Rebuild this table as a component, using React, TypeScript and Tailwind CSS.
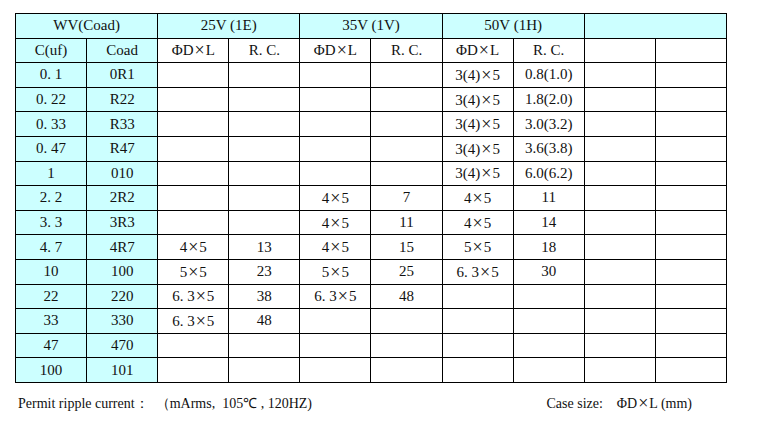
const cyan = "bg-[#ccffff]";

const rows: [string, string, string, string, string, string, string, string][] = [
  ["0. 1", "0R1", "", "", "", "", "3(4)×5", "0.8(1.0)"],
  ["0. 22", "R22", "", "", "", "", "3(4)×5", "1.8(2.0)"],
  ["0. 33", "R33", "", "", "", "", "3(4)×5", "3.0(3.2)"],
  ["0. 47", "R47", "", "", "", "", "3(4)×5", "3.6(3.8)"],
  ["1", "010", "", "", "", "", "3(4)×5", "6.0(6.2)"],
  ["2. 2", "2R2", "", "", "4×5", "7", "4×5", "11"],
  ["3. 3", "3R3", "", "", "4×5", "11", "4×5", "14"],
  ["4. 7", "4R7", "4×5", "13", "4×5", "15", "5×5", "18"],
  ["10", "100", "5×5", "23", "5×5", "25", "6. 3×5", "30"],
  ["22", "220", "6. 3×5", "38", "6. 3×5", "48", "", ""],
  ["33", "330", "6. 3×5", "48", "", "", "", ""],
  ["47", "470", "", "", "", "", "", ""],
  ["100", "101", "", "", "", "", "", ""],
];

const cell =
  "border border-black text-center align-middle p-0 leading-none [font-family:Liberation_Serif,serif] text-[15px] text-[#111]";

// the wide multiplication sign of the source sheet
function Val({ text }: { text: string }) {
  const parts = text.split("×");
  if (parts.length === 1) return <>{text}</>;
  return (
    <>
      {parts[0]}
      <span className="inline-block px-[1px] text-[18px] leading-none align-[-1px]">×</span>
      {parts[1]}
    </>
  );
}

export default function App() {
  return (
    <div className="w-[764px] h-[430px] bg-white pt-[13px] pl-[15px] [font-family:Liberation_Serif,serif] text-[15px] text-[#111]">
      <table className="table-fixed border-collapse w-[712px]">
        <colgroup>
          {Array.from({ length: 10 }).map((_, i) => (
            <col key={i} className="w-[71.1px]" />
          ))}
        </colgroup>
        <tbody>
          <tr className={`h-[24.6px] ${cyan}`}>
            <td colSpan={2} className={cell}>WV(Coad)</td>
            <td colSpan={2} className={cell}>25V (1E)</td>
            <td colSpan={2} className={cell}>35V (1V)</td>
            <td colSpan={2} className={cell}>50V (1H)</td>
            <td colSpan={2} className={cell}></td>
          </tr>
          <tr className="h-[24.6px]">
            <td className={`${cell} ${cyan}`}>C(uf)</td>
            <td className={`${cell} ${cyan}`}>Coad</td>
            <td className={cell}>ΦD<Val text="×" />L</td>
            <td className={cell}>R. C.</td>
            <td className={cell}>ΦD<Val text="×" />L</td>
            <td className={cell}>R. C.</td>
            <td className={cell}>ΦD<Val text="×" />L</td>
            <td className={cell}>R. C.</td>
            <td className={cell}></td>
            <td className={cell}></td>
          </tr>
          {rows.map((r, i) => (
            <tr key={i} className="h-[24.6px]">
              <td className={`${cell} ${cyan}`}>{r[0]}</td>
              <td className={`${cell} ${cyan}`}>{r[1]}</td>
              {r.slice(2).map((v, j) => (
                <td key={j} className={cell}>
                  <Val text={v} />
                </td>
              ))}
              <td className={cell}></td>
              <td className={cell}></td>
            </tr>
          ))}
        </tbody>
      </table>
      <div className="flex w-[677px] justify-between pl-[3px] pt-[10px] text-[14px]">
        <span>
          Permit ripple current：&nbsp;&nbsp;（mArms,&nbsp;&nbsp;105℃&nbsp;,&nbsp;120HZ)
        </span>
        <span>Case size:&nbsp;&nbsp;&nbsp; ΦD<Val text="×" />L (mm)</span>
      </div>
    </div>
  );
}
